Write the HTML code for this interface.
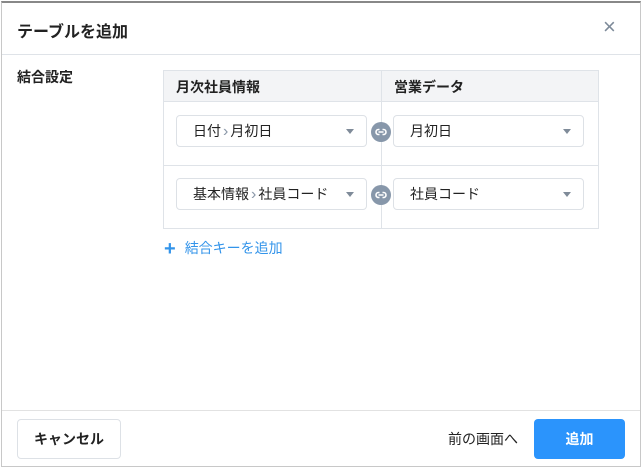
<!DOCTYPE html>
<html><head><meta charset="utf-8"><style>
*{box-sizing:border-box;margin:0;padding:0}
body{width:642px;height:468px;background:#fff;font-family:"Liberation Sans","Noto Sans CJK JP",sans-serif;color:#222;position:relative;overflow:hidden}
.frame{position:absolute;left:1px;top:1px;width:640px;height:466px;border:1px solid #c8c8c8;border-top:2px solid #888}
.abs{position:absolute}
.sel{position:absolute;height:32px;border:1px solid #dde1e6;border-radius:4px;background:#fff;font-size:14px;line-height:30px;padding-left:16px}
.sel:after{content:"";position:absolute;right:12px;top:13px;border-left:4px solid transparent;border-right:4px solid transparent;border-top:5px solid #7f8b99}
.chev{color:#8a97a8;margin:0 2px;font-size:16px}
.link{position:absolute;width:20px;height:20px;border-radius:50%;background:#8797aa}
</style></head><body>
<div class="frame"></div>
<div class="abs" style="left:17px;top:18px;font-size:16px;font-weight:bold">テーブルを追加</div>
<div class="abs" style="left:603px;top:14px;font-size:22px;color:#7d8a99">×</div>
<div class="abs" style="left:2px;top:54px;width:638px;height:1px;background:#dfe3e8"></div>
<div class="abs" style="left:17px;top:67px;font-size:14px;font-weight:bold">結合設定</div>
<div class="abs" style="left:163px;top:70px;width:436px;height:159px;border:1px solid #dfe3e8"></div>
<div class="abs" style="left:164px;top:71px;width:434px;height:31px;background:#f3f4f6;border-bottom:1px solid #dfe3e8"></div>
<div class="abs" style="left:381px;top:71px;width:1px;height:157px;background:#dfe3e8"></div>
<div class="abs" style="left:164px;top:165px;width:434px;height:1px;background:#dfe3e8"></div>
<div class="abs" style="left:176px;top:77px;font-size:14px;font-weight:bold">月次社員情報</div>
<div class="abs" style="left:394px;top:77px;font-size:14px;font-weight:bold">営業データ</div>
<div class="sel" style="left:176px;top:115px;width:191px">日付<span class="chev">›</span>月初日</div>
<div class="sel" style="left:393px;top:115px;width:191px">月初日</div>
<div class="sel" style="left:176px;top:178px;width:191px">基本情報<span class="chev">›</span>社員コード</div>
<div class="sel" style="left:393px;top:178px;width:191px">社員コード</div>
<div class="link" style="left:371px;top:122px"><svg width="20" height="20" viewBox="0 0 20 20"><path d="M8.5 7.5H7.5a2.5 2.5 0 0 0 0 5h1M11.5 7.5h1a2.5 2.5 0 0 1 0 5h-1M7.5 10h5" fill="none" stroke="#fff" stroke-width="1.6"/></svg></div>
<div class="link" style="left:371px;top:185px"><svg width="20" height="20" viewBox="0 0 20 20"><path d="M8.5 7.5H7.5a2.5 2.5 0 0 0 0 5h1M11.5 7.5h1a2.5 2.5 0 0 1 0 5h-1M7.5 10h5" fill="none" stroke="#fff" stroke-width="1.6"/></svg></div>
<div class="abs" style="left:164px;top:238px;font-size:14px;color:#3394ea"><span style="font-size:20px;font-weight:bold;vertical-align:-2px;margin-right:9px">+</span>結合キーを追加</div>
<div class="abs" style="left:2px;top:410px;width:638px;height:1px;background:#e2e2e2"></div>
<div class="abs" style="left:17px;top:419px;width:104px;height:40px;border:1px solid #dde1e6;border-radius:4px;font-size:14px;font-weight:bold;text-align:center;line-height:38px">キャンセル</div>
<div class="abs" style="left:448px;top:429px;font-size:14px">前の画面へ</div>
<div class="abs" style="left:534px;top:419px;width:91px;height:40px;background:#2b94fc;border-radius:4px;color:#fff;font-size:14px;font-weight:bold;text-align:center;line-height:40px">追加</div>
</body></html>
